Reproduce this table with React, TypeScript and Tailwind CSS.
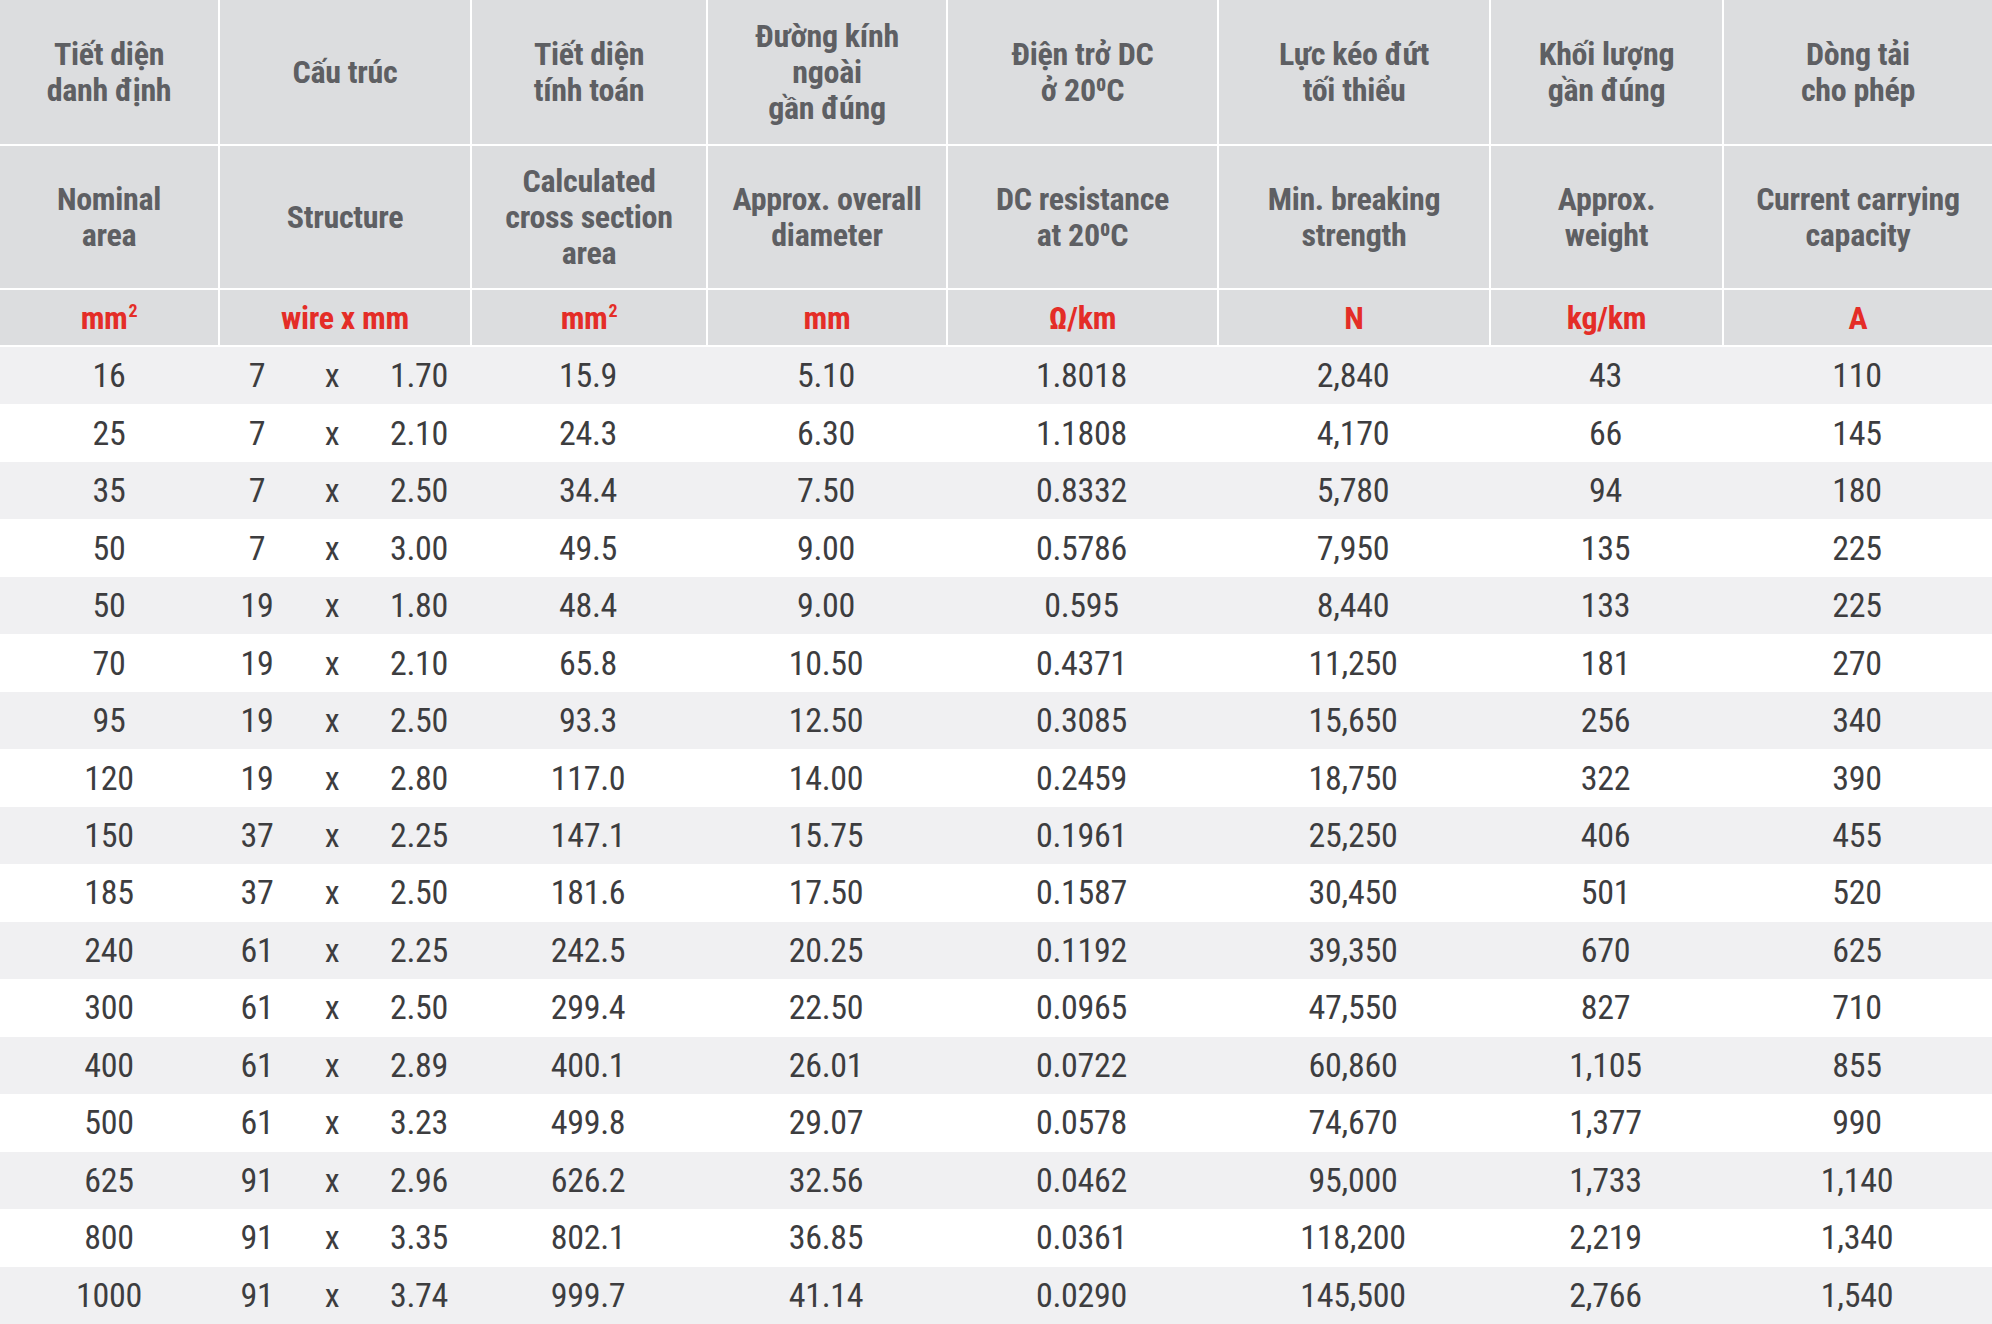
import React from "react";

const cols = ["w-[218px]", "w-[252px]", "w-[236px]", "w-[240px]", "w-[271px]", "w-[272px]", "w-[233px]", "w-[270px]"];

const vi = [
  ["Tiết diện", "danh định"],
  ["Cấu trúc"],
  ["Tiết diện", "tính toán"],
  ["Đường kính", "ngoài", "gần đúng"],
  ["Điện trở DC", "ở 20⁰C"],
  ["Lực kéo đứt", "tối thiểu"],
  ["Khối lượng", "gần đúng"],
  ["Dòng tải", "cho phép"],
];

const en = [
  ["Nominal", "area"],
  ["Structure"],
  ["Calculated", "cross section", "area"],
  ["Approx. overall", "diameter"],
  ["DC resistance", "at 20⁰C"],
  ["Min. breaking", "strength"],
  ["Approx.", "weight"],
  ["Current carrying", "capacity"],
];

const units: React.ReactNode[] = [
  <>mm<sup className="text-[18px] relative -top-[12px] ml-[1px]">2</sup></>,
  "wire x mm",
  <>mm<sup className="text-[18px] relative -top-[12px] ml-[1px]">2</sup></>,
  "mm",
  "Ω/km",
  "N",
  "kg/km",
  "A",
];

const data: string[][] = [
  ["16", "7", "1.70", "15.9", "5.10", "1.8018", "2,840", "43", "110"],
  ["25", "7", "2.10", "24.3", "6.30", "1.1808", "4,170", "66", "145"],
  ["35", "7", "2.50", "34.4", "7.50", "0.8332", "5,780", "94", "180"],
  ["50", "7", "3.00", "49.5", "9.00", "0.5786", "7,950", "135", "225"],
  ["50", "19", "1.80", "48.4", "9.00", "0.595", "8,440", "133", "225"],
  ["70", "19", "2.10", "65.8", "10.50", "0.4371", "11,250", "181", "270"],
  ["95", "19", "2.50", "93.3", "12.50", "0.3085", "15,650", "256", "340"],
  ["120", "19", "2.80", "117.0", "14.00", "0.2459", "18,750", "322", "390"],
  ["150", "37", "2.25", "147.1", "15.75", "0.1961", "25,250", "406", "455"],
  ["185", "37", "2.50", "181.6", "17.50", "0.1587", "30,450", "501", "520"],
  ["240", "61", "2.25", "242.5", "20.25", "0.1192", "39,350", "670", "625"],
  ["300", "61", "2.50", "299.4", "22.50", "0.0965", "47,550", "827", "710"],
  ["400", "61", "2.89", "400.1", "26.01", "0.0722", "60,860", "1,105", "855"],
  ["500", "61", "3.23", "499.8", "29.07", "0.0578", "74,670", "1,377", "990"],
  ["625", "91", "2.96", "626.2", "32.56", "0.0462", "95,000", "1,733", "1,140"],
  ["800", "91", "3.35", "802.1", "36.85", "0.0361", "118,200", "2,219", "1,340"],
  ["1000", "91", "3.74", "999.7", "41.14", "0.0290", "145,500", "2,766", "1,540"],
];

const font = { fontFamily: "'Roboto Condensed', 'Liberation Sans', sans-serif" };

function HeaderRow({ items, h }: { items: string[][]; h: string }) {
  return (
    <div className={`flex ${h}`}>
      {items.map((lines, i) => (
        <div
          key={i}
          className={`${cols[i]} ${i > 0 ? "border-l-2 border-white" : ""} bg-[#dcdddf] flex flex-col items-center justify-center text-center font-bold text-[32px] leading-[36px] tracking-[-0.3px] text-[#5e5f63]`}
        >
          {lines.map((l, j) => (
            <div key={j}>{l}</div>
          ))}
        </div>
      ))}
    </div>
  );
}

export default function App() {
  return (
    <div className="w-[1992px] h-[1324px] flex flex-col bg-white overflow-hidden" style={font}>
      <HeaderRow items={vi} h="h-[144px]" />
      <div className="h-[2px] bg-white" />
      <HeaderRow items={en} h="h-[142px]" />
      <div className="h-[2px] bg-white" />
      <div className="flex h-[55px]">
        {units.map((u, i) => (
          <div
            key={i}
            className={`${cols[i]} ${i > 0 ? "border-l-2 border-white" : ""} bg-[#dcdddf] flex items-center justify-center font-bold text-[32px] tracking-[-0.3px] text-[#e42d27]`}
          >
            <span>{u}</span>
          </div>
        ))}
      </div>
      <div className="h-[2px] bg-white" />
      <div className="flex-1 flex flex-col text-[34px] tracking-[-0.3px] text-[#3d3d3f]">
        {data.map((r, ri) => (
          <div key={ri} className={`flex-1 flex items-center ${ri % 2 === 0 ? "bg-[#f0f0f2]" : "bg-white"}`}>
            <div className={`${cols[0]} text-center`}>{r[0]}</div>
            <div className={`${cols[1]} grid grid-cols-[78px_72px_102px] text-center`}>
              <span>{r[1]}</span>
              <span>x</span>
              <span>{r[2]}</span>
            </div>
            <div className={`${cols[2]} text-center`}>{r[3]}</div>
            <div className={`${cols[3]} text-center`}>{r[4]}</div>
            <div className={`${cols[4]} text-center`}>{r[5]}</div>
            <div className={`${cols[5]} text-center`}>{r[6]}</div>
            <div className={`${cols[6]} text-center`}>{r[7]}</div>
            <div className={`${cols[7]} text-center`}>{r[8]}</div>
          </div>
        ))}
      </div>
    </div>
  );
}
